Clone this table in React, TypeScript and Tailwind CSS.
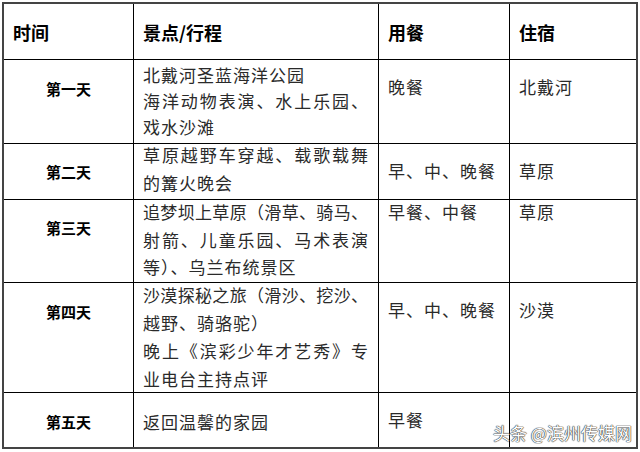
const font = { fontFamily: '"Noto Sans CJK SC", "Noto Sans", sans-serif' };

type Row = {
  day: string;
  dayPt: string;
  height: string;
  lines: { text: string; justify?: boolean }[];
  linesCls: string;
  meal: string;
  stay: string;
  mealPt: string;
};

const rows: Row[] = [
  {
    day: "第一天",
    dayPt: "pt-[19px]",
    height: "h-[84px]",
    linesCls: "leading-[26px] mt-[2px]",
    lines: [
      { text: "北戴河圣蓝海洋公园" },
      { text: "海洋动物表演、水上乐园、", justify: true },
      { text: "戏水沙滩" },
    ],
    meal: "晚餐",
    stay: "北戴河",
    mealPt: "pt-[14px]",
  },
  {
    day: "第二天",
    dayPt: "pt-[18px]",
    height: "h-[56px]",
    linesCls: "leading-[28px] -mt-[3px]",
    lines: [
      { text: "草原越野车穿越、载歌载舞", justify: true },
      { text: "的篝火晚会" },
    ],
    meal: "早、中、晚餐",
    stay: "草原",
    mealPt: "pt-[14px]",
  },
  {
    day: "第三天",
    dayPt: "pt-[18px]",
    height: "h-[83px]",
    linesCls: "leading-[27.5px] -mt-[2px]",
    lines: [
      { text: "追梦坝上草原（滑草、骑马、", justify: true },
      { text: "射箭、儿童乐园、马术表演", justify: true },
      { text: "等）、乌兰布统景区" },
    ],
    meal: "早餐、中餐",
    stay: "草原",
    mealPt: "-mt-[1px]",
  },
  {
    day: "第四天",
    dayPt: "pt-[19px]",
    height: "h-[110px]",
    linesCls: "leading-[28px] -mt-[2px]",
    lines: [
      { text: "沙漠探秘之旅（滑沙、挖沙、", justify: true },
      { text: "越野、骑骆驼）" },
      { text: "晚上《滨彩少年才艺秀》专", justify: true },
      { text: "业电台主持点评" },
    ],
    meal: "早、中、晚餐",
    stay: "沙漠",
    mealPt: "pt-[14px]",
  },
  {
    day: "第五天",
    dayPt: "pt-[19px]",
    height: "h-[54px]",
    linesCls: "leading-[26px] pt-[16px]",
    lines: [{ text: "返回温馨的家园" }],
    meal: "早餐",
    stay: "",
    mealPt: "pt-[14px]",
  },
];

export default function App() {
  return (
    <div className="relative h-[452px] w-[640px] overflow-hidden bg-white" style={font}>
      <div className="ml-[2px] mt-[2px] w-[636px] border-2 border-[#444]">
        {/* header */}
        <div className="grid h-[56px] grid-cols-[130px_245px_131px_126px] border-b border-black text-[18px] font-bold leading-[24px] text-black">
          <div className="border-r border-black pl-[9px] pt-[16px]">时间</div>
          <div className="border-r border-black pl-[9px] pt-[16px]">景点/行程</div>
          <div className="border-r border-black pl-[9px] pt-[16px]">用餐</div>
          <div className="pl-[9px] pt-[16px]">住宿</div>
        </div>

        {rows.map((row, i) => (
          <div
            key={row.day}
            className={`grid grid-cols-[130px_245px_131px_126px] ${row.height} ${
              i < rows.length - 1 ? "border-b border-black" : ""
            }`}
          >
            <div className={`border-r border-black text-center text-[15px] font-bold leading-[20px] text-black ${row.dayPt}`}>
              {row.day}
            </div>
            <div className="overflow-visible border-r border-black pl-[9px] text-[17px] text-[#2a2a2a]">
              <div className={row.linesCls}>
                {row.lines.map((l) =>
                  l.justify ? (
                    <div key={l.text} className="w-[225px] whitespace-nowrap text-justify [text-align-last:justify]">
                      {l.text}
                    </div>
                  ) : (
                    <div key={l.text} className="whitespace-nowrap tracking-[1px]">
                      {l.text}
                    </div>
                  )
                )}
              </div>
            </div>
            <div className="border-r border-black pl-[9px] text-[17px] leading-[26px] tracking-[1px] text-[#2a2a2a]">
              <div className={row.mealPt}>{row.meal}</div>
            </div>
            <div className="pl-[9px] text-[17px] leading-[26px] tracking-[1px] text-[#2a2a2a]">
              <div className={row.mealPt}>{row.stay}</div>
            </div>
          </div>
        ))}
      </div>

      {/* watermark */}
      <div className="absolute left-[493px] top-[421px] whitespace-nowrap text-[17px] leading-[24px] text-white [text-shadow:0_0_1px_#333,0_0_1px_#333,0_0_1px_#333]">
        头条 @滨州传媒网
      </div>
    </div>
  );
}
